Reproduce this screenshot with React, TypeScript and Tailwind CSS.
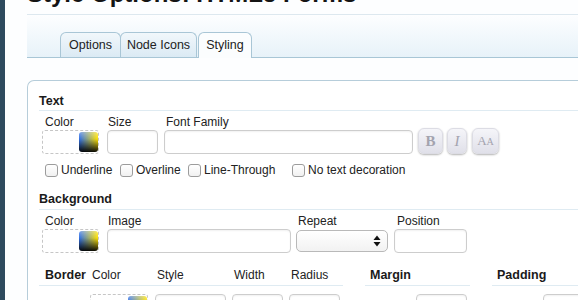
import React from "react";

function Swatch({ w = 57 }: { w?: number }) {
  return (
    <div
      className="flex h-[24px] items-center justify-end rounded-[3px] border border-dashed border-[#c6c6c6] bg-white"
      style={{ width: w }}
    >
      <div className="h-[20px] w-[19px] rounded-[3px] bg-[linear-gradient(to_bottom,rgba(255,255,255,0.35),rgba(0,0,0,0)_35%,rgba(0,0,0,0.95)),linear-gradient(to_right,#2f6fe8,#ffe200)]" />
    </div>
  );
}

function Field({ w, h = 24 }: { w: number; h?: number }) {
  return (
    <input
      readOnly
      className="block rounded-[4px] border border-[#cdcdcd] bg-white shadow-[inset_0_1px_2px_rgba(0,0,0,0.06)] outline-none"
      style={{ width: w, height: h }}
    />
  );
}

function Check({ label, w }: { label: string; w?: number }) {
  return (
    <div className="flex items-center" style={w ? { width: w } : undefined}>
      <div className="h-[13px] w-[13px] shrink-0 rounded-[3px] border border-[#9c9c9c] bg-gradient-to-b from-white to-[#f1f1f1]" />
      <span className="ml-[3px] text-[12px] leading-[16px] text-[#222]">{label}</span>
    </div>
  );
}

function FmtBtn({ w, children }: { w: number; children: React.ReactNode }) {
  return (
    <div
      className="flex h-[26px] items-center justify-center rounded-[6px] border border-[#dcdce4] bg-gradient-to-b from-[#f5f5f9] to-[#e0e0e9] font-['Liberation_Serif',serif] text-[#a3a3ae] shadow-[0_1px_2px_rgba(0,0,0,0.3)]"
      style={{ width: w }}
    >
      {children}
    </div>
  );
}

function Label({ children, pl = 2 }: { children: React.ReactNode; pl?: number }) {
  return (
    <div className="h-[16px] text-[12px] leading-[16px] text-[#222]" style={{ paddingLeft: pl }}>
      {children}
    </div>
  );
}

export default function App() {
  return (
    <div className="flex h-[300px] w-[578px] overflow-hidden bg-[#fdfeff] font-['Liberation_Sans',Arial,sans-serif]">
      <div className="w-[5px] shrink-0 bg-[#2e4a5e]" />
      <div className="ml-[22px] w-[620px] shrink-0">
        {/* title */}
        <div className="h-[15px] overflow-hidden border-b border-[#dde8ef]">
          <h1 className="mt-[-20px] whitespace-nowrap text-[24px] font-bold leading-[28px] text-[#141414]">
            Style Options: HTML5 Forms
          </h1>
        </div>
        {/* tabs */}
        <div className="flex h-[43px] items-end border-b border-[#a8c6d6] bg-gradient-to-b from-[#fdfeff] to-[#e7f2f9] pl-[33px]">
          <div className="flex h-[25px] w-[61px] items-center justify-center rounded-t-[6px] border border-b-0 border-[#a9c6d6] bg-gradient-to-b from-[#f1f7fb] to-[#dbeaf4] pt-[1px] text-[12.5px] text-[#222]">
            Options
          </div>
          <div className="ml-[-1px] flex h-[25px] w-[77px] items-center justify-center rounded-t-[6px] border border-b-0 border-[#a9c6d6] bg-gradient-to-b from-[#f1f7fb] to-[#dbeaf4] pt-[1px] text-[12.5px] text-[#222]">
            Node Icons
          </div>
          <div className="relative ml-[1px] mb-[-1px] flex h-[26px] w-[54px] items-center justify-center rounded-t-[6px] border border-b-0 border-[#a9c6d6] bg-[#fbfdfe] text-[12.5px] text-[#222]">
            Styling
          </div>
        </div>
        {/* panel */}
        <div className="mt-[22px] rounded-tl-[7px] border-l border-t border-[#b6cdda] bg-white pl-[11px]">
          {/* Text */}
          <div className="h-[30px] border-b border-[#dfebf2] pt-[11px] text-[12.5px] font-bold leading-[18px] text-[#1a1a1a]">
            Text
          </div>
          <div className="mt-[3px] flex items-end pl-[3px]">
            <div className="w-[65px]">
              <Label pl={3}>Color</Label>
              <Swatch />
            </div>
            <div className="w-[57px]">
              <Label pl={1}>Size</Label>
              <Field w={51} />
            </div>
            <div className="w-[254px]">
              <Label pl={2}>Font Family</Label>
              <Field w={249} />
            </div>
            <div className="flex gap-[4px]">
              <FmtBtn w={25}>
                <span className="text-[15px] font-bold">B</span>
              </FmtBtn>
              <FmtBtn w={20}>
                <span className="text-[15px] italic">I</span>
              </FmtBtn>
              <div className="ml-[1px]">
                <FmtBtn w={27}>
                  <span className="text-[13px]">A</span>
                  <span className="text-[10px]">A</span>
                </FmtBtn>
              </div>
            </div>
          </div>
          <div className="mt-[8px] flex h-[16px] items-center pl-[6px]">
            <Check label="Underline" w={75} />
            <Check label="Overline" w={68} />
            <Check label="Line-Through" w={104} />
            <Check label="No text decoration" />
          </div>
          {/* Background */}
          <div className="h-[32px] border-b border-[#dfebf2] pt-[12px] text-[12.5px] font-bold leading-[18px] text-[#1a1a1a]">
            Background
          </div>
          <div className="mt-[3px] flex items-start pl-[3px]">
            <div className="w-[65px]">
              <Label pl={3}>Color</Label>
              <Swatch />
            </div>
            <div className="w-[189px]">
              <Label pl={1}>Image</Label>
              <Field w={184} />
            </div>
            <div className="w-[98px]">
              <Label pl={2}>Repeat</Label>
              <div className="mt-[1px] flex h-[22px] w-[92px] items-center justify-end rounded-[5px] border border-[#b9b9b9] bg-gradient-to-b from-white to-[#f2f2f2] pr-[6px]">
                <svg width="8" height="12" viewBox="0 0 8 12">
                  <path d="M4 0.5 L7.5 5 L0.5 5 Z" fill="#111" />
                  <path d="M0.5 7 L7.5 7 L4 11.5 Z" fill="#111" />
                </svg>
              </div>
            </div>
            <div className="w-[80px]">
              <Label pl={3}>Position</Label>
              <Field w={73} />
            </div>
          </div>
          {/* Border / Margin / Padding */}
          <div className="flex">
            <div className="w-[304px]">
              <div className="flex h-[33px] border-b border-[#dfebf2] pt-[13px] text-[12px] leading-[18px] text-[#222]">
                <div className="w-[51px] pl-[6px] text-[12.5px] font-bold text-[#1a1a1a]">Border</div>
                <div className="w-[65px] pl-[2px]">Color</div>
                <div className="w-[77px] pl-[2px]">Style</div>
                <div className="w-[57px] pl-[2px]">Width</div>
                <div className="pl-[2px]">Radius</div>
              </div>
              <div className="mt-[8px] flex">
                <div className="w-[51px]" />
                <div className="w-[65px]">
                  <Swatch w={58} />
                </div>
                <div className="w-[77px]">
                  <Field w={71} />
                </div>
                <div className="w-[57px]">
                  <Field w={51} />
                </div>
                <div>
                  <Field w={51} />
                </div>
              </div>
            </div>
            <div className="ml-[22px] w-[105px]">
              <div className="h-[33px] border-b border-[#dfebf2] pl-[5px] pt-[13px] text-[12.5px] font-bold leading-[18px] text-[#1a1a1a]">
                Margin
              </div>
              <div className="mt-[8px] pl-[51px]">
                <Field w={51} />
              </div>
            </div>
            <div className="ml-[22px] w-[110px]">
              <div className="h-[33px] border-b border-[#dfebf2] pl-[5px] pt-[13px] text-[12.5px] font-bold leading-[18px] text-[#1a1a1a]">
                Padding
              </div>
              <div className="mt-[8px] pl-[51px]">
                <Field w={51} />
              </div>
            </div>
          </div>
        </div>
      </div>
    </div>
  );
}
